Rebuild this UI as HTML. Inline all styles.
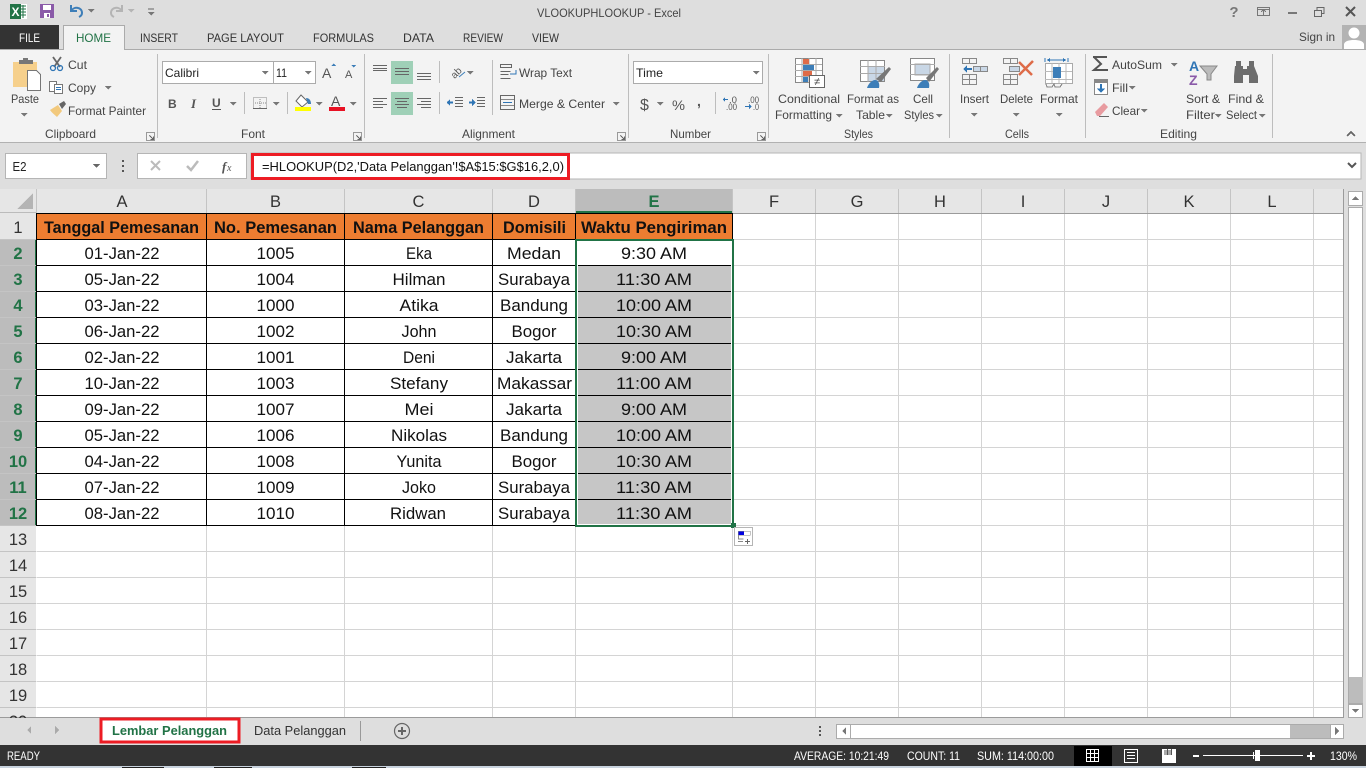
<!DOCTYPE html>
<html><head><meta charset="utf-8"><title>VLOOKUPHLOOKUP - Excel</title>
<style>
html,body{margin:0;padding:0;width:1366px;height:768px;overflow:hidden;background:#dedede}
svg{display:block;position:absolute;left:0;top:0}
text{font-family:"Liberation Sans",sans-serif;font-size:12px;fill:#444;}
.m{text-anchor:middle}
.c text{font-size:17px;fill:#111;text-anchor:middle}
.h text{font-size:17px;font-weight:bold;fill:#111;text-anchor:middle}
.ch text{font-size:16.5px;fill:#333;text-anchor:middle}
.rh text{font-size:16.5px;fill:#333;text-anchor:middle}
.rs text{font-size:16.5px;font-weight:bold;fill:#217346;text-anchor:middle}
.s text{font-size:11.5px;fill:#fff}
.car{fill:#777}
.ln{stroke:#666;stroke-width:1;fill:none}
</style></head><body>
<svg width="1366" height="768" viewBox="0 0 1366 768" xmlns="http://www.w3.org/2000/svg" shape-rendering="crispEdges">
<defs><path id="cr" d="M-3.5 0h7l-3.5 3.5z" class="car"/>
<g id="lau"><path d="M0 0h8v8h-8z" fill="none" stroke="#999"/><path d="M3 3l4 4M7 4v3h-3" stroke="#666" fill="none"/></g></defs>

<rect width="1366" height="768" fill="#dedede"/>
<!-- QAT -->
<g>
<rect x="10" y="4" width="17" height="15" fill="#fff"/><rect x="10" y="4" width="11" height="15" fill="#217346"/>
<path d="M21 6h5M21 9h5M21 12h5M21 15h5M23 5v13" stroke="#217346" fill="none"/>
<text x="11.5" y="16" style="font-size:12px;font-weight:bold;fill:#fff">X</text>
<rect x="40" y="4" width="14" height="14" fill="#8a5aa8"/><rect x="43" y="5" width="8" height="5" fill="#fff"/><rect x="44" y="13" width="6" height="5" fill="#fff"/><rect x="47" y="14" width="2" height="3" fill="#8a5aa8"/>
<g shape-rendering="auto"><path d="M71 5v6h6" fill="none" stroke="#3d7eb8" stroke-width="2"/><path d="M71 11c3-5 11-4 11 2c0 2-1 3-3 4" fill="none" stroke="#3d7eb8" stroke-width="2"/>
<path d="M122 5v6h-6" fill="none" stroke="#b4b4b4" stroke-width="2"/><path d="M122 11c-3-5-11-4-11 2c0 2 1 3 3 4" fill="none" stroke="#b4b4b4" stroke-width="2"/></g>
<use href="#cr" x="91" y="9"/><use href="#cr" x="131" y="9" opacity=".4"/>
<path d="M148 9h6" stroke="#666"/><use href="#cr" x="151" y="12"/>
</g>
<text x="537" y="17" textLength="144" lengthAdjust="spacingAndGlyphs" style="fill:#444">VLOOKUPHLOOKUP - Excel</text>
<!-- window controls -->
<text x="1234" y="17" class="m" style="font-size:15px;font-weight:bold;fill:#777">?</text>
<rect x="1257.5" y="7.5" width="12" height="8" fill="none" stroke="#777"/><path d="M1261 12l2.500-2.500l2.500 2.500M1263.500 10v5M1258 9.500h11" stroke="#777" fill="none"/>
<rect x="1288" y="12" width="9" height="2" fill="#777"/>
<rect x="1314.500" y="10.500" width="7" height="6" fill="none" stroke="#666"/><path d="M1317 10V7.500h7v6h-2" fill="none" stroke="#666"/>
<path d="M1346 7l9 9M1355 7l-9 9" stroke="#555" stroke-width="2" fill="none" shape-rendering="auto"/>
<text x="1299" y="41" textLength="36" lengthAdjust="spacingAndGlyphs">Sign in</text>
<rect x="1342" y="25" width="24" height="24" fill="#b3b3b3"/><circle cx="1354" cy="33" r="5.500" fill="#fff" shape-rendering="auto"/><path d="M1344 49v-5c1-3 5-4 10-4s9 1 10 4v5z" fill="#fff" shape-rendering="auto"/>
<!-- tabs -->
<rect x="0" y="25" width="59" height="25" fill="#333"/>
<text x="19" y="42" textLength="21" lengthAdjust="spacingAndGlyphs" style="fill:#fff">FILE</text>
<rect x="0" y="49" width="1366" height="1" fill="#ababab"/>
<rect x="63.500" y="25.500" width="61" height="25" fill="#f3f3f3" stroke="#ababab"/><rect x="64" y="49" width="60" height="2" fill="#f3f3f3"/>
<text x="76" y="42" textLength="35" lengthAdjust="spacingAndGlyphs" style="fill:#217346">HOME</text>
<text x="140" y="42" textLength="38" lengthAdjust="spacingAndGlyphs" style="fill:#333">INSERT</text>
<text x="207" y="42" textLength="77" lengthAdjust="spacingAndGlyphs" style="fill:#333">PAGE LAYOUT</text>
<text x="313" y="42" textLength="61" lengthAdjust="spacingAndGlyphs" style="fill:#333">FORMULAS</text>
<text x="403" y="42" textLength="31" lengthAdjust="spacingAndGlyphs" style="fill:#333">DATA</text>
<text x="463" y="42" textLength="40" lengthAdjust="spacingAndGlyphs" style="fill:#333">REVIEW</text>
<text x="532" y="42" textLength="27" lengthAdjust="spacingAndGlyphs" style="fill:#333">VIEW</text>
<!-- ribbon -->
<rect x="0" y="50" width="1366" height="92" fill="#f3f3f3"/><rect x="64" y="49" width="60" height="2" fill="#f3f3f3"/>
<rect x="0" y="142" width="1366" height="1" fill="#b1b1b1"/>
<g fill="#bdbdbd"><rect x="157" y="54" width="1" height="84"/><rect x="364" y="54" width="1" height="84"/><rect x="628" y="54" width="1" height="84"/><rect x="768" y="54" width="1" height="84"/><rect x="949" y="54" width="1" height="84"/><rect x="1085" y="54" width="1" height="84"/><rect x="1272" y="54" width="1" height="84"/></g>
<!-- Clipboard -->
<rect x="13" y="62" width="24" height="25" fill="#f6d08c"/><rect x="19" y="60" width="14" height="4" fill="#777"/><rect x="23" y="58" width="5" height="3" fill="#777"/>
<path d="M27.500 70.500h9l4 4v16h-13z" fill="#fff" stroke="#777"/>
<text x="11" y="103" textLength="28" lengthAdjust="spacingAndGlyphs">Paste</text><use href="#cr" x="24" y="113"/>
<g shape-rendering="auto"><path d="M53 57l7 10M61 57l-7 10" stroke="#666" stroke-width="1.800" fill="none"/><circle cx="53" cy="68" r="2.500" fill="none" stroke="#2f75b5" stroke-width="1.300"/><circle cx="60" cy="68" r="2.500" fill="none" stroke="#2f75b5" stroke-width="1.300"/></g>
<text x="68" y="69" textLength="19" lengthAdjust="spacingAndGlyphs">Cut</text>
<rect x="49.500" y="81.500" width="7" height="10" fill="#fff" stroke="#777"/><rect x="54.500" y="84.500" width="8" height="9" fill="#fff" stroke="#777"/><path d="M56 87.500h5M56 89.500h5" stroke="#2f75b5"/>
<text x="68" y="92" textLength="28" lengthAdjust="spacingAndGlyphs">Copy</text><use href="#cr" x="108" y="86"/>
<g shape-rendering="auto"><path d="M50 110l8-5l4 6l-5 6c-2-2-5-4-7-7z" fill="#f2c97d"/><path d="M59 104l5-3l2 3l-4 5z" fill="#666"/></g>
<text x="68" y="115" textLength="78" lengthAdjust="spacingAndGlyphs">Format Painter</text>
<text x="45" y="138" textLength="51" lengthAdjust="spacingAndGlyphs">Clipboard</text><use href="#lau" x="146.500" y="132.500"/>
<!-- Font -->
<rect x="162.500" y="61.500" width="153" height="22" fill="#fff" stroke="#ababab"/><rect x="273" y="61" width="1" height="23" fill="#ababab"/>
<text x="165" y="77" textLength="34" lengthAdjust="spacingAndGlyphs" style="fill:#222">Calibri</text><use href="#cr" x="265" y="71"/>
<text x="276" y="77" textLength="11" lengthAdjust="spacingAndGlyphs" style="fill:#222">11</text><use href="#cr" x="308" y="71"/>
<text x="322" y="78" style="font-size:14px;fill:#555">A</text><path d="M331 66h5l-2.500-2.500z" fill="#3d7eb8"/>
<text x="345" y="78" style="font-size:11px;fill:#555">A</text><path d="M351 65h5l-2.500 2.500z" fill="#3d7eb8"/>
<text x="168" y="108" style="font-weight:bold;fill:#555">B</text>
<text x="191" y="108" style="font-style:italic;font-family:'Liberation Serif',serif;font-weight:bold;font-size:13px;fill:#555">I</text>
<text x="212" y="107" style="font-weight:bold;fill:#555">U</text><rect x="212" y="109" width="9" height="1" fill="#555"/>
<use href="#cr" x="233" y="102"/><rect x="244" y="92" width="1" height="22" fill="#bdbdbd"/>
<path d="M253.500 97.500h13v11h-13z" fill="none" stroke="#888" stroke-dasharray="1 1"/><path d="M260 97v11M253 103h13" stroke="#888" stroke-dasharray="1 1"/><path d="M253 108.500h14" stroke="#666"/>
<use href="#cr" x="276" y="102"/><rect x="287" y="92" width="1" height="22" fill="#bdbdbd"/>
<g shape-rendering="auto"><path d="M301 95l7 7l-6 5l-6-6z" fill="#fff" stroke="#666"/><path d="M306 98c3 0 5 2 5 6h-3z" fill="#3d7eb8"/></g>
<rect x="295" y="107" width="16" height="4" fill="#ffff00"/><use href="#cr" x="319" y="102"/>
<text x="331" y="106" style="font-size:14px;fill:#555">A</text><rect x="329" y="107" width="16" height="4" fill="#e81123"/><use href="#cr" x="353" y="102"/>
<text x="241" y="138" textLength="24" lengthAdjust="spacingAndGlyphs">Font</text><use href="#lau" x="353.500" y="132.500"/>
<!-- Alignment -->
<rect x="391" y="61" width="22" height="23" fill="#9fd0b7"/><rect x="391" y="92" width="22" height="23" fill="#9fd0b7"/>
<g stroke="#666" fill="none"><path d="M373 65.500h14M373 68.500h14M373 70.500h14"/><path d="M395 68.500h14M395 71.500h14M395 74.500h14"/><path d="M417 73.500h14M417 76.500h14M417 79.500h14"/>
<path d="M373 98.500h14M373 101.500h10M373 104.500h14M373 107.500h10"/><path d="M395 98.500h14M397 101.500h10M395 104.500h14M397 107.500h10"/><path d="M417 98.500h14M421 101.500h10M417 104.500h14M421 107.500h10"/></g>
<rect x="439" y="61" width="1" height="22" fill="#bdbdbd"/><rect x="439" y="92" width="1" height="22" fill="#bdbdbd"/><rect x="492" y="60" width="1" height="55" fill="#bdbdbd"/>
<g shape-rendering="auto"><text x="450" y="76" transform="rotate(-45 456 72)" style="font-size:10px;fill:#555">ab</text><path d="M459 77l6-5" stroke="#3d7eb8" fill="none"/></g><use href="#cr" x="470" y="71"/>
<g stroke="#666" fill="none"><path d="M455 97.500h8M455 100.500h8M455 103.500h8M455 106.500h8M477 97.500h8M477 100.500h8M477 103.500h8M477 106.500h8"/></g>
<path d="M447 102.500h6M469 102.500h6" stroke="#2f75b5" stroke-width="2"/><path d="M450 99l-3 3.500l3 3.500z" fill="#2f75b5"/><path d="M472 99l4 3.500l-4 3.500z" fill="#2f75b5"/>
<g fill="none" stroke="#666"><path d="M500.500 64.500h11v3h-11zM500.500 71.500h10M500.500 74.500h8M500.500 78.500h10"/></g><path d="M516 70v4h-6" stroke="#2f75b5" fill="none"/>
<text x="519" y="77" textLength="53" lengthAdjust="spacingAndGlyphs">Wrap Text</text>
<rect x="500.500" y="95.500" width="14" height="14" fill="none" stroke="#666"/><path d="M501 99.500h13M501 105.500h13" stroke="#888"/><path d="M503 102.500h9" stroke="#2f75b5"/>
<text x="519" y="108" textLength="86" lengthAdjust="spacingAndGlyphs">Merge &amp; Center</text><use href="#cr" x="616" y="102"/>
<text x="462" y="138" textLength="53" lengthAdjust="spacingAndGlyphs">Alignment</text><use href="#lau" x="617.500" y="132.500"/>
<!-- Number -->
<rect x="633.500" y="61.500" width="129" height="22" fill="#fff" stroke="#ababab"/>
<text x="636" y="77" textLength="27" lengthAdjust="spacingAndGlyphs" style="fill:#222">Time</text><use href="#cr" x="756" y="71"/>
<text x="640" y="110" style="font-size:16px;fill:#555">$</text><use href="#cr" x="660" y="102"/>
<text x="672" y="110" style="font-size:14px;fill:#555" textLength="13" lengthAdjust="spacingAndGlyphs">%</text>
<text x="697" y="106" style="font-size:14px;font-weight:bold;fill:#555">,</text>
<rect x="715" y="92" width="1" height="22" fill="#bdbdbd"/>
<text x="729" y="103" textLength="8" lengthAdjust="spacingAndGlyphs" style="font-size:9px;fill:#555">.0</text><text x="726" y="110" textLength="11" lengthAdjust="spacingAndGlyphs" style="font-size:9px;fill:#555">.00</text><path d="M725 99.500h3" stroke="#2f75b5"/><path d="M725 97v5l-2.500-2.500z" fill="#2f75b5"/>
<text x="748" y="103" textLength="11" lengthAdjust="spacingAndGlyphs" style="font-size:9px;fill:#555">.00</text><text x="753" y="110" textLength="6" lengthAdjust="spacingAndGlyphs" style="font-size:9px;fill:#555">.0</text><path d="M745 106.500h5" stroke="#2f75b5"/><path d="M749 104v5l3-2.500z" fill="#2f75b5"/>
<text x="670" y="138" textLength="41" lengthAdjust="spacingAndGlyphs">Number</text><use href="#lau" x="757.500" y="132.500"/>
<!-- Styles -->
<rect x="795.500" y="58.500" width="27" height="24" fill="#fff" stroke="#888"/><path d="M802 58v25M809 58v25M816 58v25M795 64.500h27M795 70.500h27M795 76.500h27" stroke="#aaa"/>
<rect x="803" y="59" width="6" height="5" fill="#de6b48"/><rect x="803" y="65" width="11" height="5" fill="#3d7eb8"/><rect x="803" y="71" width="9" height="5" fill="#de6b48"/><rect x="803" y="77" width="5" height="5" fill="#3d7eb8"/>
<rect x="809.500" y="75.500" width="15" height="12" fill="#fff" stroke="#666"/><text x="817" y="85" class="m" style="font-size:11px;fill:#444">≠</text>
<text x="778" y="103" textLength="62" lengthAdjust="spacingAndGlyphs">Conditional</text><text x="775" y="119" textLength="57" lengthAdjust="spacingAndGlyphs">Formatting</text><use href="#cr" x="839" y="114"/>
<rect x="860.500" y="60.500" width="24" height="21" fill="#fff" stroke="#888"/><rect x="868" y="66" width="16" height="15" fill="#c9d7e6"/><path d="M868 60v22M876 60v22M860 66.500h25M860 73.500h25" stroke="#aaa"/>
<g shape-rendering="auto"><path d="M876 79l13-12l2 2l-10 13z" fill="#777"/><path d="M867 88c1-4 5-8 8-8c3 0 5 3 4 8z" fill="#3d7eb8"/></g>
<text x="847" y="103" textLength="52" lengthAdjust="spacingAndGlyphs">Format as</text><text x="856" y="119" textLength="29" lengthAdjust="spacingAndGlyphs">Table</text><use href="#cr" x="889" y="114"/>
<rect x="910.500" y="58.500" width="24" height="22" fill="#fff" stroke="#888"/><rect x="915" y="64" width="15" height="11" fill="#c9d7e6" stroke="#aaa"/><path d="M910 64.500h25M910 74.500h25" stroke="#aaa"/>
<g shape-rendering="auto"><path d="M926 78l11-11l2 2l-10 13z" fill="#777"/><path d="M917 88c1-4 5-8 8-8c3 0 5 3 4 8z" fill="#3d7eb8"/></g>
<text x="913" y="103" textLength="20" lengthAdjust="spacingAndGlyphs">Cell</text><text x="904" y="119" textLength="30" lengthAdjust="spacingAndGlyphs">Styles</text><use href="#cr" x="939" y="114"/>
<text x="844" y="138" textLength="29" lengthAdjust="spacingAndGlyphs">Styles</text>
<!-- Cells -->
<g fill="none" stroke="#888"><path d="M962.500 58.500h14v5h-14zM969.500 58v5M962.500 74.500h14v10h-14zM969.500 74v10M962 79.500h14"/></g>
<rect x="973.500" y="66.500" width="14" height="5" fill="#c9d7e6" stroke="#888"/><path d="M980.500 66v5" stroke="#888"/><path d="M964 69h8" stroke="#2f75b5" stroke-width="2"/><path d="M967 65.500l-4 3.500l4 3.500z" fill="#2f75b5"/>
<text x="960" y="103" textLength="29" lengthAdjust="spacingAndGlyphs">Insert</text><use href="#cr" x="974" y="113"/>
<g fill="none" stroke="#888"><path d="M1003.500 58.500h14v5h-14zM1010.500 58v5M1003.500 74.500h14v10h-14zM1010.500 74v10M1003 79.500h14"/></g>
<rect x="1009.500" y="66.500" width="10" height="5" fill="#c9d7e6" stroke="#888"/>
<path d="M1019 62l13 13M1033 61l-14 14" stroke="#de6b48" stroke-width="2.500" fill="none" shape-rendering="auto"/>
<text x="1000" y="103" textLength="33" lengthAdjust="spacingAndGlyphs">Delete</text><use href="#cr" x="1016" y="113"/>
<rect x="1045.500" y="63.500" width="27" height="20" fill="#fff" stroke="#aaa"/><path d="M1052 63v20M1059 63v20M1066 63v20M1045 71.500h27M1045 79.500h27" stroke="#bbb"/><rect x="1053" y="67" width="8" height="11" fill="#3d7eb8"/>
<path d="M1045 58v4M1068 58v4" stroke="#2f75b5"/><path d="M1047 60h19" stroke="#2f75b5"/><path d="M1050 58l-3 2l3 2zM1063 58l3 2l-3 2z" fill="#2f75b5"/>
<path d="M1046 84l1 3h5l2-3l1 3h5l2-3" stroke="#888" fill="none"/>
<text x="1040" y="103" textLength="38" lengthAdjust="spacingAndGlyphs">Format</text><use href="#cr" x="1059" y="113"/>
<text x="1005" y="138" textLength="24" lengthAdjust="spacingAndGlyphs">Cells</text>
<!-- Editing -->
<path d="M1093 57h14M1094 57l7 7l-7 6h14" fill="none" stroke="#555" stroke-width="2" shape-rendering="auto"/>
<text x="1112" y="69" textLength="50" lengthAdjust="spacingAndGlyphs">AutoSum</text><use href="#cr" x="1174" y="63"/>
<rect x="1094.500" y="79.500" width="13" height="15" fill="#fff" stroke="#888"/><rect x="1094" y="79" width="14" height="4" fill="#888"/><path d="M1101 84v8" stroke="#2f75b5" stroke-width="2"/><path d="M1097 88.500l4 4.500l4-4.500z" fill="#2f75b5"/>
<text x="1112" y="92" textLength="16" lengthAdjust="spacingAndGlyphs">Fill</text><use href="#cr" x="1132" y="86"/>
<g shape-rendering="auto"><path d="M1095 112l9-9l4 4l-8 9h-3z" fill="#e89ba0"/></g><path d="M1099 116.500h10" stroke="#666"/>
<text x="1112" y="115" textLength="28" lengthAdjust="spacingAndGlyphs">Clear</text><use href="#cr" x="1144" y="109"/>
<text x="1189" y="71" style="font-size:14px;font-weight:bold;fill:#2f75b5">A</text><text x="1189" y="85" style="font-size:14px;font-weight:bold;fill:#8a5aa8">Z</text>
<path d="M1200 66h17l-6 8v6h-4v-6z" fill="#bbb" stroke="#888" shape-rendering="auto"/>
<text x="1186" y="103" textLength="34" lengthAdjust="spacingAndGlyphs">Sort &amp;</text><text x="1186" y="119" textLength="29" lengthAdjust="spacingAndGlyphs">Filter</text><use href="#cr" x="1218" y="114"/>
<g fill="#6d6d6d" shape-rendering="auto"><path d="M1236 61h5v5h-5zM1249 61h5v5h-5z"/><path d="M1235 66h8v3h4v-3h7l4 10v7h-9v-8h-6v8h-9v-7z"/></g>
<text x="1228" y="103" textLength="36" lengthAdjust="spacingAndGlyphs">Find &amp;</text><text x="1226" y="119" textLength="31" lengthAdjust="spacingAndGlyphs">Select</text><use href="#cr" x="1262" y="114"/>
<text x="1160" y="138" textLength="37" lengthAdjust="spacingAndGlyphs">Editing</text>
<path d="M1347 136l4-4l4 4" fill="none" stroke="#666" stroke-width="2"/>

<!-- formula bar -->
<rect x="5.500" y="153.500" width="101" height="25" fill="#fff" stroke="#b5b5b5"/>
<text x="12.500" y="171" textLength="14" lengthAdjust="spacingAndGlyphs" style="fill:#222;font-size:13px">E2</text>
<path d="M93 164h7l-3.500 4z" fill="#666"/>
<path d="M122 160h2v2h-2zM122 165h2v2h-2zM122 170h2v2h-2z" fill="#555"/>
<rect x="137.500" y="153.500" width="109" height="25" fill="#fff" stroke="#b5b5b5"/>
<path d="M151 161l9 9M160 161l-9 9" stroke="#bbb" stroke-width="2" shape-rendering="auto" fill="none"/>
<path d="M187 166l4 4l7-9" stroke="#bbb" stroke-width="2.500" shape-rendering="auto" fill="none"/>
<text x="222" y="171" style="font-family:'Liberation Serif',serif;font-style:italic;font-weight:bold;font-size:13px;fill:#555">f</text><text x="227" y="171" style="font-family:'Liberation Serif',serif;font-style:italic;font-size:10px;fill:#555">x</text>
<rect x="251" y="153" width="1110" height="26" fill="#fff" stroke="#b5b5b5"/>
<rect x="252.500" y="154.500" width="316" height="24" fill="#fff" stroke="#ed1c24" stroke-width="3"/>
<text x="262" y="171" textLength="302" lengthAdjust="spacingAndGlyphs" style="fill:#111;font-size:12.500px">=HLOOKUP(D2,'Data Pelanggan'!$A$15:$G$16,2,0)</text>
<path d="M1348 163l4 4l4-4" stroke="#555" stroke-width="2" fill="none" shape-rendering="auto"/>

<!-- sheet -->
<rect x="0" y="213" width="1344" height="504" fill="#fff"/>
<rect x="0" y="189" width="1344" height="24" fill="#e6e6e6"/>
<rect x="0" y="213" width="36" height="504" fill="#e6e6e6"/>
<path d="M33 193v16h-16z" fill="#b4b4b4"/>
<rect x="576" y="189" width="157" height="24" fill="#bcbcbc"/><rect x="576" y="211" width="157" height="2" fill="#217346"/>
<rect x="0" y="239" width="36" height="286" fill="#bcbcbc"/><rect x="35" y="239" width="2" height="286" fill="#217346"/>
<!-- grid -->
<g stroke="#d4d4d4" fill="none"><path d="M36.500 239.500H1344M36.500 265.500H1344M36.500 291.500H1344M36.500 317.500H1344M36.500 343.500H1344M36.500 369.500H1344M36.500 395.500H1344M36.500 421.500H1344M36.500 447.500H1344M36.500 473.500H1344M36.500 499.500H1344M36.500 525.500H1344M36.500 551.500H1344M36.500 577.500H1344M36.500 603.500H1344M36.500 629.500H1344M36.500 655.500H1344M36.500 681.500H1344M36.500 707.500H1344"/>
<path d="M206.500 213V717M344.500 213V717M492.500 213V717M575.500 213V717M732.500 213V717M815.500 213V717M898.500 213V717M981.500 213V717M1064.500 213V717M1147.500 213V717M1230.500 213V717M1313.500 213V717"/></g>
<g stroke="#c4c4c4" fill="none"><path d="M36.500 189V213M206.500 189V213M344.500 189V213M492.500 189V213M575.500 189V213M732.500 189V213M815.500 189V213M898.500 189V213M981.500 189V213M1064.500 189V213M1147.500 189V213M1230.500 189V213M1313.500 189V213"/>
<path d="M0 239.500h36M0 265.500h36M0 291.500h36M0 317.500h36M0 343.500h36M0 369.500h36M0 395.500h36M0 421.500h36M0 447.500h36M0 473.500h36M0 499.500h36M0 525.500h36M0 551.500h36M0 577.500h36M0 603.500h36M0 629.500h36M0 655.500h36M0 681.500h36M0 707.500h36"/></g>
<rect x="36" y="213" width="1308" height="1" fill="#9b9b9b"/><rect x="1343" y="189" width="1" height="528" fill="#9b9b9b"/><rect x="0" y="717" width="1344" height="1" fill="#9b9b9b"/><rect x="0" y="212" width="36" height="1" fill="#bbb"/>
<!-- table -->
<rect x="37" y="214" width="695" height="25" fill="#ed7d31"/>
<rect x="577" y="266" width="155" height="259" fill="#c6c6c6"/>
<g stroke="#000" fill="none"><path d="M36 213.500H733M36 239.500H576M36 265.500H732M36 291.500H732M36 317.500H732M36 343.500H732M36 369.500H732M36 395.500H732M36 421.500H732M36 447.500H732M36 473.500H732M36 499.500H732M36 525.500H576"/>
<path d="M36.500 213V526M206.500 213V526M344.500 213V526M492.500 213V526M575.500 213V526M732.500 213V240"/></g>
<rect x="577" y="241" width="1" height="284" fill="#fff"/><rect x="731" y="241" width="1" height="284" fill="#fff"/><rect x="577" y="524" width="155" height="1" fill="#fff"/>
<rect x="576" y="239" width="157" height="2" fill="#217346"/><rect x="575" y="239" width="2" height="288" fill="#217346"/><rect x="732" y="239" width="2" height="285" fill="#217346"/><rect x="575" y="525" width="157" height="2" fill="#217346"/>
<rect x="731" y="523" width="5" height="5" fill="#217346" stroke="#fff" stroke-width="0"/>
<rect x="734.500" y="527.500" width="18" height="18" fill="#fff" stroke="#b5b5b5"/><rect x="738" y="531" width="6" height="4" fill="#0000e0"/><rect x="738" y="531" width="12" height="4" fill="none" stroke="#888" stroke-width=".5"/><path d="M738.500 535v4h5M738 541.500h5" stroke="#888" fill="none"/><path d="M745 541.500h5M747.500 539v5" stroke="#666"/>

<g class="ch">
<text x="122" y="207">A</text><text x="275.500" y="207">B</text><text x="418.500" y="207">C</text><text x="534" y="207">D</text><text x="654" y="207" style="fill:#217346;font-weight:bold">E</text><text x="774" y="207">F</text><text x="857" y="207">G</text><text x="940" y="207">H</text><text x="1023" y="207">I</text><text x="1106" y="207">J</text><text x="1189" y="207">K</text><text x="1272" y="207">L</text>
</g>
<g class="rh"><text x="18" y="233">1</text><text x="18" y="545">13</text><text x="18" y="571">14</text><text x="18" y="597">15</text><text x="18" y="623">16</text><text x="18" y="649">17</text><text x="18" y="675">18</text><text x="18" y="701">19</text><text x="18" y="727">20</text></g>
<g class="rs"><text x="18" y="259">2</text><text x="18" y="285">3</text><text x="18" y="311">4</text><text x="18" y="337">5</text><text x="18" y="363">6</text><text x="18" y="389">7</text><text x="18" y="415">8</text><text x="18" y="441">9</text><text x="18" y="467">10</text><text x="18" y="493">11</text><text x="18" y="519">12</text></g>
<g class="h">
<text x="121.500" y="233" textLength="155" lengthAdjust="spacingAndGlyphs">Tanggal Pemesanan</text>
<text x="275.500" y="233" textLength="123" lengthAdjust="spacingAndGlyphs">No. Pemesanan</text>
<text x="418.500" y="233" textLength="131" lengthAdjust="spacingAndGlyphs">Nama Pelanggan</text>
<text x="534.500" y="233" textLength="63" lengthAdjust="spacingAndGlyphs">Domisili</text>
<text x="654" y="233" textLength="146" lengthAdjust="spacingAndGlyphs">Waktu Pengiriman</text>
</g>
<g class="c">
<text x="122" y="259" textLength="75" lengthAdjust="spacingAndGlyphs">01-Jan-22</text><text x="275.500" y="259" textLength="38" lengthAdjust="spacingAndGlyphs">1005</text><text x="419" y="259" textLength="26" lengthAdjust="spacingAndGlyphs">Eka</text><text x="534" y="259" textLength="54" lengthAdjust="spacingAndGlyphs">Medan</text><text x="654" y="259" textLength="66" lengthAdjust="spacingAndGlyphs">9:30 AM</text>
<text x="122" y="285" textLength="75" lengthAdjust="spacingAndGlyphs">05-Jan-22</text><text x="275.500" y="285" textLength="38" lengthAdjust="spacingAndGlyphs">1004</text><text x="419" y="285" textLength="53" lengthAdjust="spacingAndGlyphs">Hilman</text><text x="534" y="285" textLength="72" lengthAdjust="spacingAndGlyphs">Surabaya</text><text x="654" y="285" textLength="76" lengthAdjust="spacingAndGlyphs">11:30 AM</text>
<text x="122" y="311" textLength="75" lengthAdjust="spacingAndGlyphs">03-Jan-22</text><text x="275.500" y="311" textLength="38" lengthAdjust="spacingAndGlyphs">1000</text><text x="419" y="311" textLength="39" lengthAdjust="spacingAndGlyphs">Atika</text><text x="534" y="311" textLength="68" lengthAdjust="spacingAndGlyphs">Bandung</text><text x="654" y="311" textLength="76" lengthAdjust="spacingAndGlyphs">10:00 AM</text>
<text x="122" y="337" textLength="75" lengthAdjust="spacingAndGlyphs">06-Jan-22</text><text x="275.500" y="337" textLength="38" lengthAdjust="spacingAndGlyphs">1002</text><text x="419" y="337" textLength="35" lengthAdjust="spacingAndGlyphs">John</text><text x="534" y="337" textLength="45" lengthAdjust="spacingAndGlyphs">Bogor</text><text x="654" y="337" textLength="76" lengthAdjust="spacingAndGlyphs">10:30 AM</text>
<text x="122" y="363" textLength="75" lengthAdjust="spacingAndGlyphs">02-Jan-22</text><text x="275.500" y="363" textLength="38" lengthAdjust="spacingAndGlyphs">1001</text><text x="419" y="363" textLength="32" lengthAdjust="spacingAndGlyphs">Deni</text><text x="534" y="363" textLength="56" lengthAdjust="spacingAndGlyphs">Jakarta</text><text x="654" y="363" textLength="66" lengthAdjust="spacingAndGlyphs">9:00 AM</text>
<text x="122" y="389" textLength="75" lengthAdjust="spacingAndGlyphs">10-Jan-22</text><text x="275.500" y="389" textLength="38" lengthAdjust="spacingAndGlyphs">1003</text><text x="419" y="389" textLength="58" lengthAdjust="spacingAndGlyphs">Stefany</text><text x="534.500" y="389" textLength="75" lengthAdjust="spacingAndGlyphs">Makassar</text><text x="654" y="389" textLength="76" lengthAdjust="spacingAndGlyphs">11:00 AM</text>
<text x="122" y="415" textLength="75" lengthAdjust="spacingAndGlyphs">09-Jan-22</text><text x="275.500" y="415" textLength="38" lengthAdjust="spacingAndGlyphs">1007</text><text x="419" y="415" textLength="29" lengthAdjust="spacingAndGlyphs">Mei</text><text x="534" y="415" textLength="56" lengthAdjust="spacingAndGlyphs">Jakarta</text><text x="654" y="415" textLength="66" lengthAdjust="spacingAndGlyphs">9:00 AM</text>
<text x="122" y="441" textLength="75" lengthAdjust="spacingAndGlyphs">05-Jan-22</text><text x="275.500" y="441" textLength="38" lengthAdjust="spacingAndGlyphs">1006</text><text x="419" y="441" textLength="56" lengthAdjust="spacingAndGlyphs">Nikolas</text><text x="534" y="441" textLength="68" lengthAdjust="spacingAndGlyphs">Bandung</text><text x="654" y="441" textLength="76" lengthAdjust="spacingAndGlyphs">10:00 AM</text>
<text x="122" y="467" textLength="75" lengthAdjust="spacingAndGlyphs">04-Jan-22</text><text x="275.500" y="467" textLength="38" lengthAdjust="spacingAndGlyphs">1008</text><text x="419" y="467" textLength="45" lengthAdjust="spacingAndGlyphs">Yunita</text><text x="534" y="467" textLength="45" lengthAdjust="spacingAndGlyphs">Bogor</text><text x="654" y="467" textLength="76" lengthAdjust="spacingAndGlyphs">10:30 AM</text>
<text x="122" y="493" textLength="75" lengthAdjust="spacingAndGlyphs">07-Jan-22</text><text x="275.500" y="493" textLength="38" lengthAdjust="spacingAndGlyphs">1009</text><text x="419" y="493" textLength="34" lengthAdjust="spacingAndGlyphs">Joko</text><text x="534" y="493" textLength="72" lengthAdjust="spacingAndGlyphs">Surabaya</text><text x="654" y="493" textLength="76" lengthAdjust="spacingAndGlyphs">11:30 AM</text>
<text x="122" y="519" textLength="75" lengthAdjust="spacingAndGlyphs">08-Jan-22</text><text x="275.500" y="519" textLength="38" lengthAdjust="spacingAndGlyphs">1010</text><text x="418" y="519" textLength="56" lengthAdjust="spacingAndGlyphs">Ridwan</text><text x="534" y="519" textLength="72" lengthAdjust="spacingAndGlyphs">Surabaya</text><text x="654" y="519" textLength="76" lengthAdjust="spacingAndGlyphs">11:30 AM</text>
</g>
<!-- v scroll -->
<rect x="1344" y="189" width="22" height="529" fill="#dedede"/>
<rect x="1348.500" y="191.500" width="14" height="14" fill="#fff" stroke="#ababab"/><path d="M1352 200h7l-3.500-4z" fill="#777"/>
<rect x="1348.500" y="207.500" width="14" height="496" fill="#fff" stroke="#ababab"/>
<rect x="1349" y="677" width="14" height="26" fill="#bcbcbc"/>
<rect x="1348.500" y="704.500" width="14" height="13" fill="#fff" stroke="#ababab"/><path d="M1352 709h7l-3.500 4z" fill="#777"/>
<!-- tabs bar -->
<rect x="0" y="718" width="1366" height="27" fill="#dedede"/>
<path d="M31 726v8l-4-4zM55 726v8l4-4z" fill="#aaa"/>
<rect x="101" y="719" width="138" height="23" fill="#fff" stroke="#ed1c24" stroke-width="3"/>
<text x="112" y="735" textLength="115" lengthAdjust="spacingAndGlyphs" style="font-weight:bold;fill:#217346;font-size:12.500px">Lembar Pelanggan</text>
<text x="254" y="735" textLength="92" lengthAdjust="spacingAndGlyphs" style="fill:#333;font-size:12.500px">Data Pelanggan</text>
<rect x="360" y="721" width="1" height="20" fill="#999"/>
<g shape-rendering="auto"><circle cx="402" cy="731" r="7.500" fill="none" stroke="#666" stroke-width="1.200"/></g><path d="M398 730h8v2h-8zM401 727h2v8h-2z" fill="#666"/>
<path d="M819 726h2v2h-2zM819 730h2v2h-2zM819 734h2v2h-2z" fill="#555"/>
<rect x="836.500" y="724.500" width="507" height="14" fill="#bcbcbc" stroke="#ababab"/>
<rect x="837" y="725" width="14" height="13" fill="#fff"/><rect x="851" y="725" width="439" height="13" fill="#fff"/><rect x="1330" y="725" width="14" height="13" fill="#fff"/>
<path d="M836.500 724.500h14v14h-14zM1330.500 724.500h13v14h-13z" fill="none" stroke="#ababab"/>
<path d="M846 727v8l-4-4zM1335 727v8l4-4z" fill="#777"/>
<!-- status -->
<rect x="0" y="745" width="1366" height="21" fill="#333"/>
<rect x="0" y="766" width="1366" height="2" fill="#c9d3de"/>
<g fill="#222"><rect x="122" y="767" width="42" height="1"/><rect x="214" y="767" width="38" height="1"/><rect x="352" y="767" width="34" height="1"/></g>
<g class="s">
<text x="7" y="760" textLength="33" lengthAdjust="spacingAndGlyphs">READY</text>
<text x="794" y="760" textLength="95" lengthAdjust="spacingAndGlyphs">AVERAGE: 10:21:49</text>
<text x="907" y="760" textLength="53" lengthAdjust="spacingAndGlyphs">COUNT: 11</text>
<text x="977" y="760" textLength="77" lengthAdjust="spacingAndGlyphs">SUM: 114:00:00</text>
<text x="1330" y="760" textLength="27" lengthAdjust="spacingAndGlyphs">130%</text>
</g>
<rect x="1074" y="746" width="38" height="20" fill="#000"/>
<path d="M1086.500 749.500h12v12h-12zM1090.500 749v13M1094.500 749v13M1086 753.500h13M1086 757.500h13" fill="none" stroke="#fff"/>
<rect x="1124.500" y="749.500" width="13" height="13" fill="none" stroke="#fff"/><path d="M1127 752.500h8M1127 755.500h8M1127 758.500h8" stroke="#fff"/>
<rect x="1162.500" y="749.500" width="13" height="13" fill="#fff" stroke="#fff"/><path d="M1167 749h1v6h-1zM1171 749h1v6h-1z" fill="#555"/><rect x="1164" y="750" width="3" height="5" fill="#aaa"/><rect x="1168" y="750" width="3" height="5" fill="#aaa"/>
<rect x="1193" y="755" width="6" height="2" fill="#fff"/>
<rect x="1203" y="755" width="100" height="1" fill="#fff"/><rect x="1255" y="750" width="5" height="11" fill="#fff"/><rect x="1253" y="752" width="1" height="7" fill="#fff"/>
<path d="M1307 755h8v2h-8zM1310 752h2v8h-2z" fill="#fff"/>
</svg>
</body></html>
